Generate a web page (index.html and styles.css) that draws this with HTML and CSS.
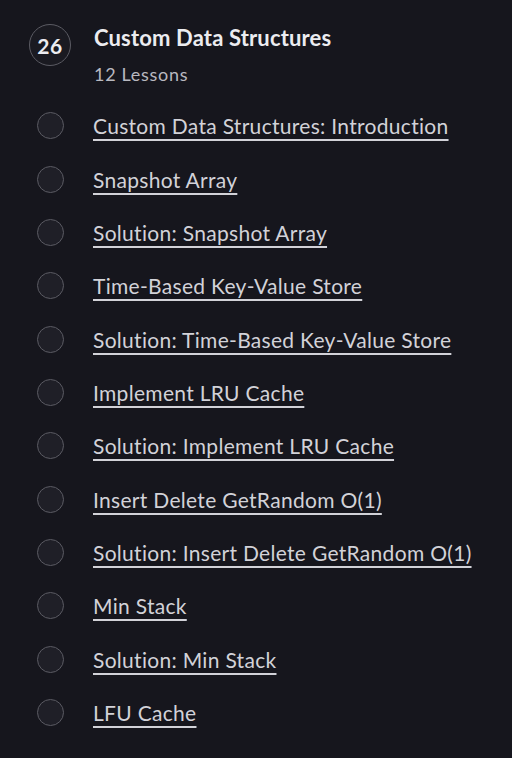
FILE: index.html
```html
<!DOCTYPE html>
<html>
<head>
<meta charset="utf-8">
<link rel="stylesheet" href="styles.css">
</head>
<body>
<section class="chapter">
  <div class="chapter-head">
    <div class="num">26</div>
    <div class="head-text">
      <div class="title">Custom Data Structures</div>
      <div class="count">12 Lessons</div>
    </div>
  </div>
  <ul class="lessons">
    <li><span class="dot"></span><a href="#">Custom Data Structures: Introduction</a></li>
    <li><span class="dot"></span><a href="#">Snapshot Array</a></li>
    <li><span class="dot"></span><a href="#">Solution: Snapshot Array</a></li>
    <li><span class="dot"></span><a href="#">Time-Based Key-Value Store</a></li>
    <li><span class="dot"></span><a href="#">Solution: Time-Based Key-Value Store</a></li>
    <li><span class="dot"></span><a href="#">Implement LRU Cache</a></li>
    <li><span class="dot"></span><a href="#">Solution: Implement LRU Cache</a></li>
    <li><span class="dot"></span><a href="#">Insert Delete GetRandom O(1)</a></li>
    <li><span class="dot"></span><a href="#">Solution: Insert Delete GetRandom O(1)</a></li>
    <li><span class="dot"></span><a href="#">Min Stack</a></li>
    <li><span class="dot"></span><a href="#">Solution: Min Stack</a></li>
    <li><span class="dot"></span><a href="#">LFU Cache</a></li>
  </ul>
</section>
</body>
</html>
```
FILE: styles.css
```css
html, body {
  margin: 0;
  padding: 0;
  background: #16161d;
  height: 100%;
}
body {
  font-family: "Lato", "Noto Sans", sans-serif;
  color: #d2d2d8;
}
.chapter {
  padding: 24px 0 0 29px;
}
.chapter-head {
  display: flex;
  gap: 23px;
  align-items: flex-start;
}
.num {
  box-sizing: border-box;
  width: 42px;
  height: 42px;
  border: 1px solid #5b5b63;
  border-radius: 50%;
  background: #1a1a21;
  display: flex;
  align-items: center;
  justify-content: center;
  font-size: 21px;
  font-weight: 700;
  letter-spacing: 0.5px;
  color: #ececf0;
  flex: none;
}
.head-text {
  padding-top: 0.5px;
}
.title {
  font-size: 22px;
  font-weight: 700;
  letter-spacing: 0.15px;
  color: #ececf0;
  line-height: 26px;
}
.count {
  font-size: 18px;
  letter-spacing: 0.7px;
  color: #b9b9c0;
  margin-top: 13.5px;
  line-height: 20px;
}
.lessons {
  list-style: none;
  margin: 15px 0 0 0;
  padding: 0;
}
.lessons li {
  display: flex;
  align-items: center;
  height: 53.36px;
}
.dot {
  box-sizing: border-box;
  width: 27px;
  height: 27px;
  border: 1px solid #5b5b63;
  border-radius: 50%;
  background: #1f1f27;
  margin-left: 7.5px;
  margin-right: 29.5px;
  flex: none;
}
.lessons a {
  color: #d2d2d8;
  font-size: 21px;
  letter-spacing: 0.3px;
  text-decoration: underline;
  text-underline-offset: 4.5px;
  text-decoration-thickness: 2px;
}
```
